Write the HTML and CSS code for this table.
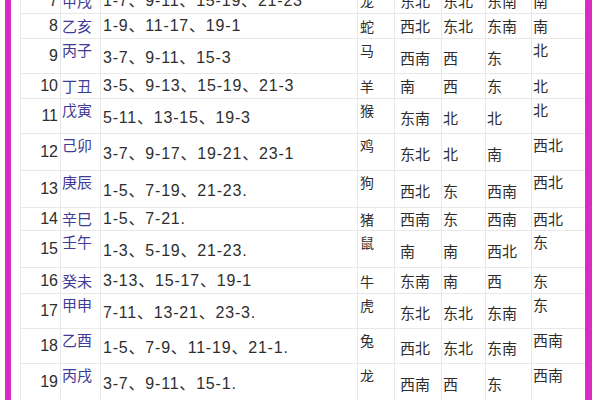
FILE: index.html
```html
<!DOCTYPE html>
<html lang="zh">
<head>
<meta charset="utf-8">
<link rel="stylesheet" href="styles.css">
</head>
<body>
<div class="frame">
<table class="grid">
<colgroup>
<col class="c-num"><col class="c-gz"><col class="c-time"><col class="c-zod"><col class="c-d1"><col class="c-d2"><col class="c-d3"><col class="c-d4">
</colgroup>
<tbody>
<tr class="short r25"><td class="num">7</td><td class="gz">甲戌</td><td class="time">1-7、9-11、15-19、21-23</td><td class="zod">龙</td><td class="dir first">东北</td><td class="dir">东北</td><td class="dir">东南</td><td class="dir last">南</td></tr>
<tr class="short r25"><td class="num">8</td><td class="gz">乙亥</td><td class="time">1-9、11-17、19-1</td><td class="zod">蛇</td><td class="dir first">西北</td><td class="dir">东北</td><td class="dir">东南</td><td class="dir last">南</td></tr>
<tr class="tall r35"><td class="num">9</td><td class="gz">丙子</td><td class="time">3-7、9-11、15-3</td><td class="zod">马</td><td class="dir first">西南</td><td class="dir">西</td><td class="dir">东</td><td class="dir last">北</td></tr>
<tr class="short r25"><td class="num">10</td><td class="gz">丁丑</td><td class="time">3-5、9-13、15-19、21-3</td><td class="zod">羊</td><td class="dir first">南</td><td class="dir">西</td><td class="dir">东</td><td class="dir last">北</td></tr>
<tr class="tall r35"><td class="num">11</td><td class="gz">戊寅</td><td class="time">5-11、13-15、19-3</td><td class="zod">猴</td><td class="dir first">东南</td><td class="dir">北</td><td class="dir">北</td><td class="dir last">北</td></tr>
<tr class="tall r37"><td class="num">12</td><td class="gz">己卯</td><td class="time">3-7、9-17、19-21、23-1</td><td class="zod">鸡</td><td class="dir first">东北</td><td class="dir">北</td><td class="dir">南</td><td class="dir last">西北</td></tr>
<tr class="tall r37"><td class="num">13</td><td class="gz">庚辰</td><td class="time">1-5、7-19、21-23.</td><td class="zod">狗</td><td class="dir first">西北</td><td class="dir">东</td><td class="dir">西南</td><td class="dir last">西北</td></tr>
<tr class="short r23"><td class="num">14</td><td class="gz">辛巳</td><td class="time">1-5、7-21.</td><td class="zod">猪</td><td class="dir first">西南</td><td class="dir">东</td><td class="dir">西南</td><td class="dir last">西北</td></tr>
<tr class="tall r37"><td class="num">15</td><td class="gz">壬午</td><td class="time">1-3、5-19、21-23.</td><td class="zod">鼠</td><td class="dir first">南</td><td class="dir">南</td><td class="dir">西北</td><td class="dir last">东</td></tr>
<tr class="short r26"><td class="num">16</td><td class="gz">癸未</td><td class="time">3-13、15-17、19-1</td><td class="zod">牛</td><td class="dir first">东南</td><td class="dir">南</td><td class="dir">西</td><td class="dir last">东</td></tr>
<tr class="tall r35"><td class="num">17</td><td class="gz">甲申</td><td class="time">7-11、13-21、23-3.</td><td class="zod">虎</td><td class="dir first">东北</td><td class="dir">东北</td><td class="dir">东南</td><td class="dir last">东</td></tr>
<tr class="tall r35"><td class="num">18</td><td class="gz">乙酉</td><td class="time">1-5、7-9、11-19、21-1.</td><td class="zod">兔</td><td class="dir first">西北</td><td class="dir">东北</td><td class="dir">东南</td><td class="dir last">西南</td></tr>
<tr class="tall r37"><td class="num">19</td><td class="gz">丙戌</td><td class="time">3-7、9-11、15-1.</td><td class="zod">龙</td><td class="dir first">西南</td><td class="dir">西</td><td class="dir">东</td><td class="dir last">西南</td></tr>
</tbody>
</table>
</div>
</body>
</html>
```
FILE: styles.css
```css
html, body {
  margin: 0;
  padding: 0;
  background: #ffffff;
}
body {
  width: 600px;
  height: 400px;
  overflow: hidden;
}
.frame {
  height: 400px;
  margin: 0 8px 0 5px;
  border-left: 6px solid #d82cc4;
  border-right: 7px solid #d82cc4;
  padding-left: 9px;
  overflow: hidden;
  background: #ffffff;
}
.grid {
  width: 565px;
  margin-top: -12px;
  border-collapse: collapse;
  table-layout: fixed;
  font-family: "Liberation Sans", "Noto Sans CJK SC", sans-serif;
  color: #2e2e2e;
}
.c-num { width: 40px; }
.c-gz { width: 40px; }
.c-time { width: 257px; }
.c-zod { width: 37px; }
.c-d1 { width: 47px; }
.c-d2 { width: 44px; }
.c-d3 { width: 46px; }
.c-d4 { width: 54px; }
.grid td {
  border: 1px solid #e8e8e8;
  padding: 0 0 0 2px;
  line-height: 18px;
  white-space: nowrap;
  overflow: hidden;
  vertical-align: middle;
}
.r23 { height: 23px; }
.r25 { height: 25px; }
.r26 { height: 26px; }
.r35 { height: 35px; }
.r37 { height: 37px; }
.grid td.num {
  text-align: right;
  padding: 0 2px 0 0;
  font-size: 16px;
}
.grid td.gz {
  font-family: "Noto Sans CJK SC", sans-serif;
  font-size: 15px;
  color: #3f3b96;
  padding-left: 1px;
}
.grid td.time {
  font-size: 16px;
  letter-spacing: 0.8px;
  padding-left: 2px;
}
.grid td.zod {
  font-family: "Noto Sans CJK SC", sans-serif;
  font-size: 14px;
  padding-left: 2px;
}
.grid td.dir {
  font-family: "Noto Sans CJK SC", sans-serif;
  font-size: 15px;
  padding-left: 1px;
}
.grid td.dir.first {
  padding-left: 5px;
}
.tall td {
  padding-top: 4px;
}
.tall td.gz,
.tall td.zod,
.tall td.last {
  vertical-align: top;
  padding-top: 2px;
}
```
